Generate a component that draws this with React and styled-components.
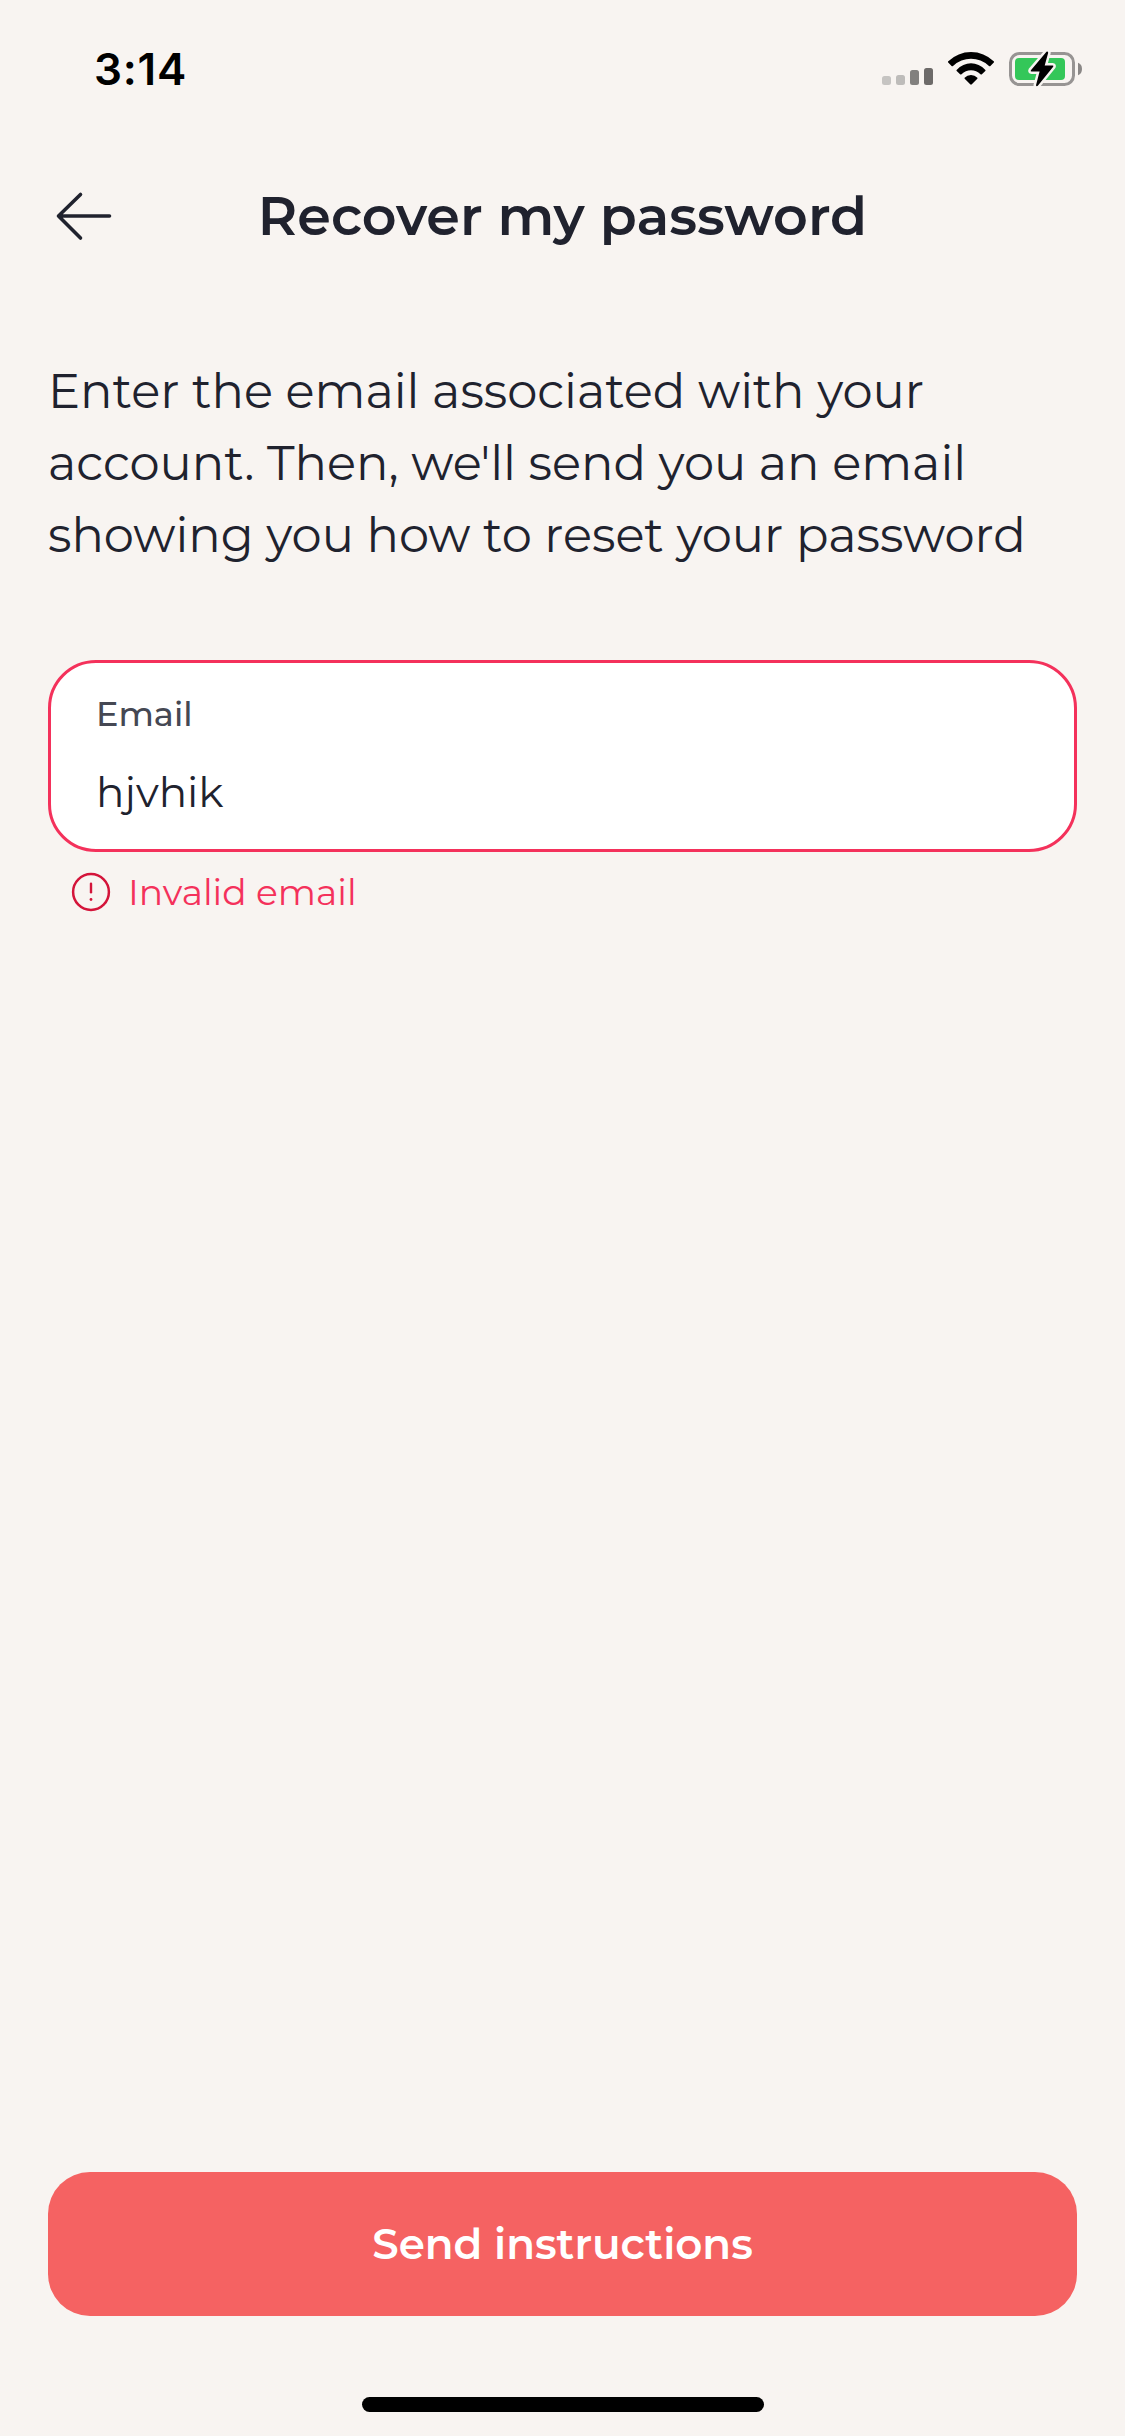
import React from "react";
import styled, { createGlobalStyle } from "styled-components";

const GlobalStyle = createGlobalStyle`
  *, *::before, *::after { box-sizing: border-box; }
  body {
    margin: 0;
    background: #f8f4f1;
    font-family: Montserrat, Inter, "Liberation Sans", sans-serif;
    color: #20222e;
  }
`;

const Screen = styled.main`
  width: 1125px;
  height: 2436px;
  display: flex;
  flex-direction: column;
  background: #f8f4f1;
  overflow: hidden;
`;

const StatusBar = styled.div`
  height: 132px;
  padding: 6px 41px 0 94px;
  display: flex;
  align-items: center;
  justify-content: space-between;
`;

const Time = styled.span`
  font-family: Inter, "Liberation Sans", sans-serif;
  font-size: 44px;
  line-height: 60px;
  font-weight: 600;
  letter-spacing: 0.8px;
  color: #000;
`;

const Header = styled.header`
  height: 168px;
  padding: 0 48px;
  display: grid;
  grid-template-columns: 72px 1fr 72px;
  align-items: center;
`;

const BackButton = styled.button`
  width: 72px;
  height: 72px;
  padding: 0;
  border: 0;
  background: none;
  display: flex;
  color: #20222e;
`;

const Title = styled.h1`
  margin: 0;
  text-align: center;
  font-size: 54px;
  line-height: 66px;
  font-weight: 600;
  white-space: nowrap;
`;

const Content = styled.section`
  flex: 1;
  padding: 55px 48px 0;
  display: flex;
  flex-direction: column;
`;

const Intro = styled.p`
  margin: 0 0 89px;
  font-size: 48px;
  line-height: 72px;
  font-weight: 400;
`;

const Field = styled.label`
  height: 192px;
  padding: 27px 45px 0;
  display: flex;
  flex-direction: column;
  gap: 24px;
  background: #fff;
  border: 3px solid #f4315b;
  border-radius: 48px;
`;

const FieldLabel = styled.span`
  font-size: 33.5px;
  line-height: 48px;
  font-weight: 500;
  color: #454853;
`;

const FieldValue = styled.span`
  font-size: 42px;
  line-height: 60px;
  font-weight: 400;
`;

const ErrorRow = styled.div`
  height: 48px;
  margin-top: 16px;
  padding-left: 19px;
  display: flex;
  align-items: center;
  gap: 13px;
  font-size: 36px;
  font-weight: 400;
  color: #f4315b;
`;

const Footer = styled.footer`
  padding: 0 48px 24px;
  display: flex;
  flex-direction: column;
  align-items: center;
  gap: 81px;
`;

const SubmitButton = styled.button`
  width: 100%;
  height: 144px;
  padding: 0;
  border: 0;
  border-radius: 42px;
  background: #f56262;
  color: #fff;
  font-family: inherit;
  font-size: 42px;
  line-height: 54px;
  font-weight: 600;
`;

const HomeIndicator = styled.div`
  width: 402px;
  height: 15px;
  border-radius: 8px;
  background: #000;
`;

const StatusIcons = () => (
  <svg width="204" height="44" viewBox="880 47 204 44" fill="none">
    <rect x="882" y="76" width="9" height="9" rx="2.5" fill="#c6c4c2" />
    <rect x="896" y="75" width="9" height="10" rx="2.5" fill="#bebcba" />
    <rect x="910" y="70" width="9" height="15" rx="2.5" fill="#82807e" />
    <rect x="924" y="68" width="9" height="17" rx="2.5" fill="#6d6a69" />
    <path d="M948 61.5 Q958 52 971 52 Q984 52 994 61.5 Q994.3 62 993.8 62.6 L990.4 66 Q989.7 66.5 989 65.9 Q981 58.8 971 58.8 Q961 58.8 953 65.9 Q952.3 66.5 951.6 66 L948.2 62.6 Q947.7 62 948 61.5Z" fill="#000" />
    <path d="M956.6 69.9 Q963 63.3 971 63.3 Q979 63.3 985.4 69.9 Q985.8 70.4 985.3 71 L981.9 74.3 Q981.2 74.9 980.5 74.3 Q976.4 70.3 971 70.3 Q965.6 70.3 961.5 74.3 Q960.8 74.9 960.1 74.3 L956.7 71 Q956.2 70.4 956.6 69.9Z" fill="#000" />
    <path d="M964.6 77.8 Q967.2 75 971 75 Q974.8 75 977.4 77.8 Q977.7 78.3 977.3 78.8 L971.8 84.3 Q971 85.1 970.2 84.3 L964.7 78.8 Q964.3 78.3 964.6 77.8Z" fill="#000" />
    <rect x="1010.5" y="53.5" width="63" height="31" rx="9" stroke="#979493" strokeWidth="3" />
    <path d="M1078 62.8 Q1082 64.2 1082 69 Q1082 73.8 1078 75.2Z" fill="#8a8786" />
    <rect x="1015" y="58" width="50" height="22" rx="4" fill="#34c759" />
    <path d="M1046.5 51.8 L1030.9 70.2 Q1030.2 71.6 1031.6 71.6 L1039.6 71.6 L1036 85.2 Q1036.4 86.8 1037.8 85.8 L1053.2 66.8 Q1053.8 65.4 1052.6 65.4 L1044.7 65.4 L1048.2 52.8 Q1047.8 51 1046.5 51.8Z" fill="#000" stroke="#f8f4f1" strokeWidth="5" strokeLinejoin="round" paintOrder="stroke" />
  </svg>
);

const BackArrow = () => (
  <svg width="72" height="72" viewBox="0 0 72 72" fill="none">
    <path d="M32.5 14.5 L10.5 36 L32.5 58 M10.5 36 H61.5" stroke="currentColor" strokeWidth="3.6" strokeLinecap="round" strokeLinejoin="round" />
  </svg>
);

const AlertIcon = () => (
  <svg width="48" height="48" viewBox="0 0 48 48" fill="none">
    <circle cx="24" cy="24" r="17.9" stroke="#d4143a" strokeWidth="2.5" />
    <path d="M24 15.8 V24.2" stroke="#d4143a" strokeWidth="2.4" strokeLinecap="round" />
    <circle cx="24" cy="31.5" r="1.4" fill="#d4143a" />
  </svg>
);

export default function App() {
  return (
    <>
      <GlobalStyle />
      <Screen>
        <StatusBar>
          <Time>3:14</Time>
          <StatusIcons />
        </StatusBar>
        <Header>
          <BackButton aria-label="Back">
            <BackArrow />
          </BackButton>
          <Title>Recover my password</Title>
        </Header>
        <Content>
          <Intro>
            Enter the email associated with your account. Then, we'll send you
            an email showing you how to reset your password
          </Intro>
          <Field>
            <FieldLabel>Email</FieldLabel>
            <FieldValue>hjvhik</FieldValue>
          </Field>
          <ErrorRow>
            <AlertIcon />
            <span>Invalid email</span>
          </ErrorRow>
        </Content>
        <Footer>
          <SubmitButton>Send instructions</SubmitButton>
          <HomeIndicator />
        </Footer>
      </Screen>
    </>
  );
}
